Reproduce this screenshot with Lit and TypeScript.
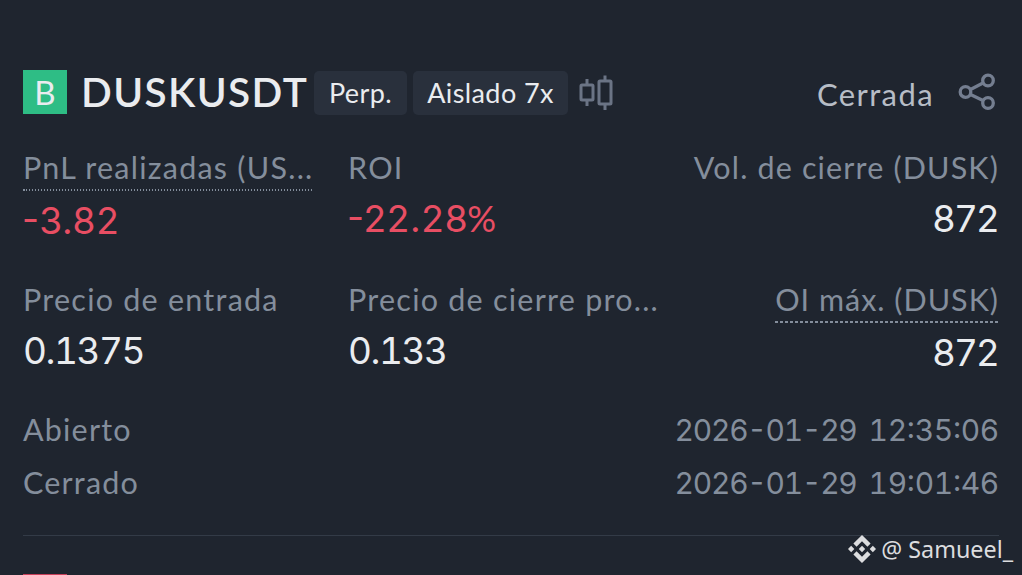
import {LitElement, css, html, nothing, svg} from 'lit';
import {customElement, property} from 'lit/decorators.js';
import {classMap} from 'lit/directives/class-map.js';

type Stat = {
  label: string;
  value: string;
  unit?: string;
  underline?: 'dotted' | 'dashed';
  loss?: boolean;
};

const stats: Stat[] = [
  {label: 'PnL realizadas (US...', value: '-3.82', underline: 'dotted', loss: true},
  {label: 'ROI', value: '-22.28', unit: '%', loss: true},
  {label: 'Vol. de cierre (DUSK)', value: '872'},
  {label: 'Precio de entrada', value: '0.1375'},
  {label: 'Precio de cierre pro...', value: '0.133'},
  {label: 'OI máx. (DUSK)', value: '872', underline: 'dashed'},
];

const times = [
  {label: 'Abierto', date: '2026-01-29', time: '12:35:06'},
  {label: 'Cerrado', date: '2026-01-29', time: '19:01:46'},
];

@customElement('position-stat')
class PositionStat extends LitElement {
  @property({attribute: false}) stat!: Stat;

  static styles = css`
    :host {
      display: flex;
      flex-direction: column;
      align-items: flex-start;
      white-space: nowrap;
    }
    :host([end]) {
      align-items: flex-end;
    }
    .label {
      font: 400 30.5px/36px Lato, sans-serif;
      letter-spacing: 1.24px;
      color: #848e9c;
      margin-bottom: 10px;
    }
    :host([end]) .label {
      letter-spacing: 1.15px;
    }
    .dotted, .dashed {
      padding-bottom: 6px;
      margin-bottom: 6px;
      background-repeat: no-repeat;
      background-position: 0 100%;
      background-size: 100% 2px;
    }
    .dotted {
      background-image: repeating-linear-gradient(90deg, #848e9c 0 1.5px, transparent 1.5px 3px);
    }
    :host([end]) .dashed {
      letter-spacing: 1px;
      background-image: repeating-linear-gradient(90deg, #848e9c 0 3px, transparent 3px 5px);
    }
    .value {
      height: 48px;
      font: 400 37px/48px Inter, sans-serif;
      font-feature-settings: "tnum";
      letter-spacing: -1.5px;
      color: #eaecef;
    }
    :host([end]) .value {
      font-feature-settings: normal;
      letter-spacing: 0;
    }
    .loss {
      font-feature-settings: "case";
      letter-spacing: 0.7px;
      margin-left: -1px;
      color: #e84e63;
    }
    .unit {
      font-family: Lato, sans-serif;
      font-size: 36px;
      line-height: 1;
      letter-spacing: 0;
      margin-left: -1px;
    }
  `

  render() {
    const {label, value, unit, underline, loss} = this.stat;
    return html`
      <div class=${classMap({label: true, dotted: underline === 'dotted', dashed: underline === 'dashed'})}>${label}</div>
      <div class=${classMap({value: true, loss: !!loss})}>${value}${unit ? html`<span class="unit">${unit}</span>` : nothing}</div>
    `;
  }
}

@customElement('app-root')
class AppRoot extends LitElement {
  static styles = css`
    :host {
      display: block;
      position: relative;
      box-sizing: border-box;
      height: 575px;
      padding: 70px 23px 0;
      overflow: hidden;
      background: #1f252f;
      color: #eaecef;
      font-family: Lato, sans-serif;
      white-space: nowrap;
    }
    header {
      display: flex;
      align-items: flex-start;
      height: 45px;
    }
    .side {
      width: 44px;
      height: 44px;
      background: #2ebd85;
      font: 400 33px/44px Lato, sans-serif;
      text-align: center;
    }
    .symbol {
      margin-left: 14px;
      width: 233px;
      box-sizing: border-box;
      font-size: 40.5px;
      font-weight: 600;
      line-height: 44px;
      letter-spacing: 1.4px;
    }
    .tag {
      height: 44px;
      margin-top: 1px;
      box-sizing: border-box;
      border-radius: 5px;
      background: #29303c;
      text-align: center;
      font-size: 27px;
      line-height: 44px;
      letter-spacing: 0.4px;
      width: 93px;
      margin-right: 6px;
    }
    .margin-mode {
      width: 155px;
      margin-right: 10px;
    }
    .candles {
      margin-top: 4px;
    }
    .status {
      margin-left: auto;
      margin-right: 24px;
      font-size: 31px;
      line-height: 49px;
      letter-spacing: 1.4px;
      color: #b7bdc6;
    }
    .share {
      margin-top: 3px;
      margin-right: 3px;
    }
    svg {
      display: block;
      flex: none;
    }
    .stats {
      display: grid;
      grid-template-columns: 325px 325px 1fr;
      grid-auto-rows: 96px;
      row-gap: 36px;
      margin-top: 34px;
    }
    .times {
      margin-top: 26px;
      font-size: 30.5px;
      line-height: 53px;
      color: #848e9c;
    }
    .time {
      display: flex;
      justify-content: space-between;
      letter-spacing: 1.2px;
    }
    .stamp {
      display: flex;
      gap: 12px;
      height: 53px;
      font: 400 30px/54px Inter, sans-serif;
      font-feature-settings: "tnum", "case";
      letter-spacing: -0.3px;
    }
    .date {
      letter-spacing: -1.25px;
    }
    .divider {
      height: 1px;
      margin-top: 26px;
      background: #333b47;
    }
    .next {
      width: 44px;
      height: 44px;
      margin-top: 38px;
      background: #c8405a;
    }
    .watermark {
      position: absolute;
      right: 9px;
      bottom: 10px;
      display: flex;
      align-items: center;
      gap: 5px;
      font: 400 23.3px/32px "Noto Sans", sans-serif;
      color: #dcdddf;
    }
  `

  candles() {
    return html`
      <svg class="candles" width="36" height="38" viewBox="0 0 36 38" fill="none" stroke="#6b7485" stroke-width="3">
        <rect x="3" y="11" width="12" height="15" rx="1" />
        <path d="M9 5v6M9 26v6" />
        <rect x="21" y="7" width="12" height="23" rx="1" />
        <path d="M27 1.500v5.500M27 30v6" />
      </svg>
    `
  }

  shareIcon() {
    return html`
      <svg class="share" width="38" height="38" viewBox="0 0 38 38" fill="none" stroke="#747e90" stroke-width="3.300">
        ${[[7.5, 19], [30, 7.5], [30, 30]].map(([x, y]) => svg`<circle cx=${x} cy=${y} r="5.300" />`)}
        <path d="M12.500 16.500 25 10M12.500 21.500 25 27.500" />
      </svg>
    `
  }

  logo() {
    return html`
      <svg width="28" height="28" viewBox="0 0 126.600 126.600" fill="#dcdddf">
        <path d="m38.700 53.200 24.600-24.600 24.600 24.600 14.300-14.300L63.300 0 24.400 38.900zM0 63.300 14.300 49l14.300 14.300-14.300 14.300zM38.700 73.400l24.600 24.600 24.600-24.600 14.300 14.300-38.900 38.900-38.900-38.900zM98 63.300 112.300 49l14.300 14.300-14.300 14.300zM77.800 63.300 63.300 48.800 48.800 63.300l14.500 14.500z" />
      </svg>
    `
  }

  render() {
    return html`
      <header>
        <div class="side">B</div>
        <div class="symbol">DUSKUSDT</div>
        <div class="tag">Perp.</div>
        <div class="tag margin-mode">Aislado 7x</div>
        ${this.candles()}
        <div class="status">Cerrada</div>
        ${this.shareIcon()}
      </header>
      <div class="stats">
        ${stats.map((stat, i) => html`<position-stat .stat=${stat} end=${i % 3 === 2 ? '' : nothing}></position-stat>`)}
      </div>
      <div class="times">
        ${times.map(({label, date, time}) => html`
          <div class="time">
            <span>${label}</span>
            <span class="stamp"><span class="date">${date}</span> <span>${time}</span></span>
          </div>
        `)}
      </div>
      <div class="divider"></div>
      <div class="next"></div>
      <div class="watermark">${this.logo()}<span>@ Samueel_</span></div>
    `;
  }
}
